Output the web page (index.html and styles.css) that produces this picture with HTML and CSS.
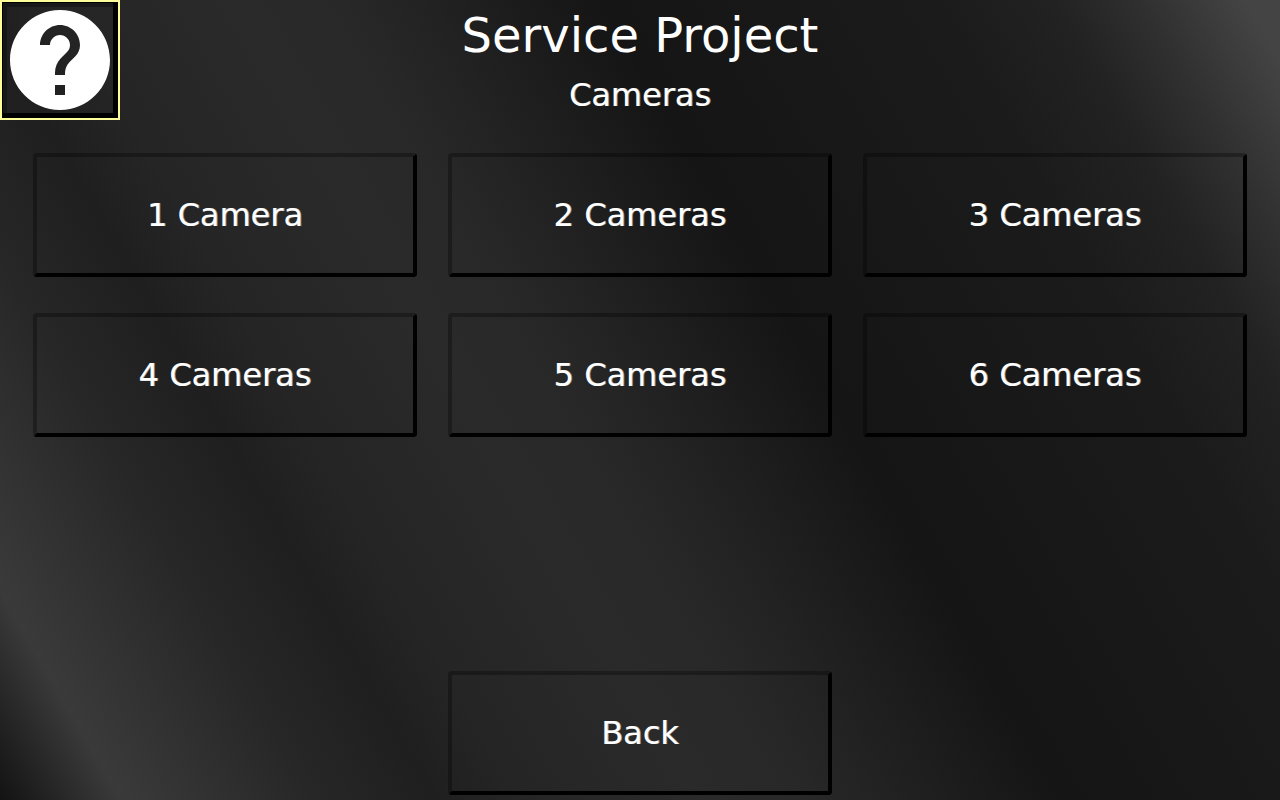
FILE: index.html
```html
<!DOCTYPE html>
<html lang="en">
<head>
<meta charset="UTF-8">
<meta name="viewport" content="width=device-width, initial-scale=1.0">
<title>Service Project</title>

  <link rel="stylesheet" href="styles.css">
</head>

<body>
  <button class="help" aria-label="Help">
    <svg viewBox="2 2 20 20" fill="#fff">
      <path d="M12 2C6.48 2 2 6.48 2 12s4.480 10 10 10 10-4.480 10-10S17.520 2 12 2zm1 17h-2v-2h2v2zm2.070-7.750l-.9.920C13.450 12.900 13 13.500 13 15h-2v-.5c0-1.100.450-2.100 1.170-2.830l1.240-1.260c.370-.360.590-.860.590-1.410 0-1.100-.9-2-2-2s-2 .9-2 2H8c0-2.210 1.790-4 4-4s4 1.790 4 4c0 .880-.360 1.680-.930 2.250z"/>
    </svg>
  </button>

  <header>
    <h1>Service Project</h1>
    <h2>Cameras</h2>
  </header>

  <main class="buttons">
    <button>1 Camera</button>
    <button>2 Cameras</button>
    <button>3 Cameras</button>
    <button>4 Cameras</button>
    <button>5 Cameras</button>
    <button>6 Cameras</button>
  </main>

  <footer class="buttons">
    <button class="back">Back</button>
  </footer>
</body>
</html>
```

FILE: styles.css
```css
* {
  box-sizing: border-box;
}

body {
  font-family: 'DejaVu Sans', sans-serif;
  display: flex;
  flex-direction: column;
  min-height: 100vh;
  margin: 0;
  color: #fff;
  background: linear-gradient(60deg,
    #131313 0%, #3a3a3a 7%, #272727 18%, #1f1f1f 25%,
    #252525 30%, #2a2a2a 40%, #282828 46%, #222 51%,
    #151515 61%, #1b1b1b 80%, #222 87%, #303030 92%,
    #444 98%, #444 100%);
}

header {
  text-align: center;
}

h1, h2 {
  margin: 0;
  font-weight: normal;
}

h1 {
  font-size: 48px;
  line-height: 70px;
}

h2 {
  font-size: 32px;
  line-height: 50px;
}

h2, .buttons button {
  text-shadow: 1px 0 rgba(255, 255, 255, 0.5);
}

.buttons {
  display: grid;
  grid-template-columns: repeat(3, 1fr);
  gap: 36px 31px;
  padding: 33px 33px 5px;
}

.buttons button {
  height: 124px;
  font-family: inherit;
  font-size: 32px;
  color: #fff;
  background: transparent;
  border: 4px solid #000;
  border-top-color: rgba(0, 0, 0, 0.3);
  border-left-color: rgba(0, 0, 0, 0.3);
  border-radius: 4px;
  cursor: pointer;
}

.buttons .back {
  grid-column: 2;
}

footer {
  margin-top: auto;
}

/* sits over the top left corner */
.help {
  position: absolute;
  top: 0;
  left: 0;
  width: 120px;
  height: 120px;
  padding: 8px;
  background: transparent;
  border: 2px solid #ff9;
  box-shadow: inset 0 0 0 1px #000, inset -5px -5px #000, inset 5px 5px rgba(0, 0, 0, 0.3);
  cursor: pointer;
}

.help svg {
  display: block;
  width: 100%;
}
```
